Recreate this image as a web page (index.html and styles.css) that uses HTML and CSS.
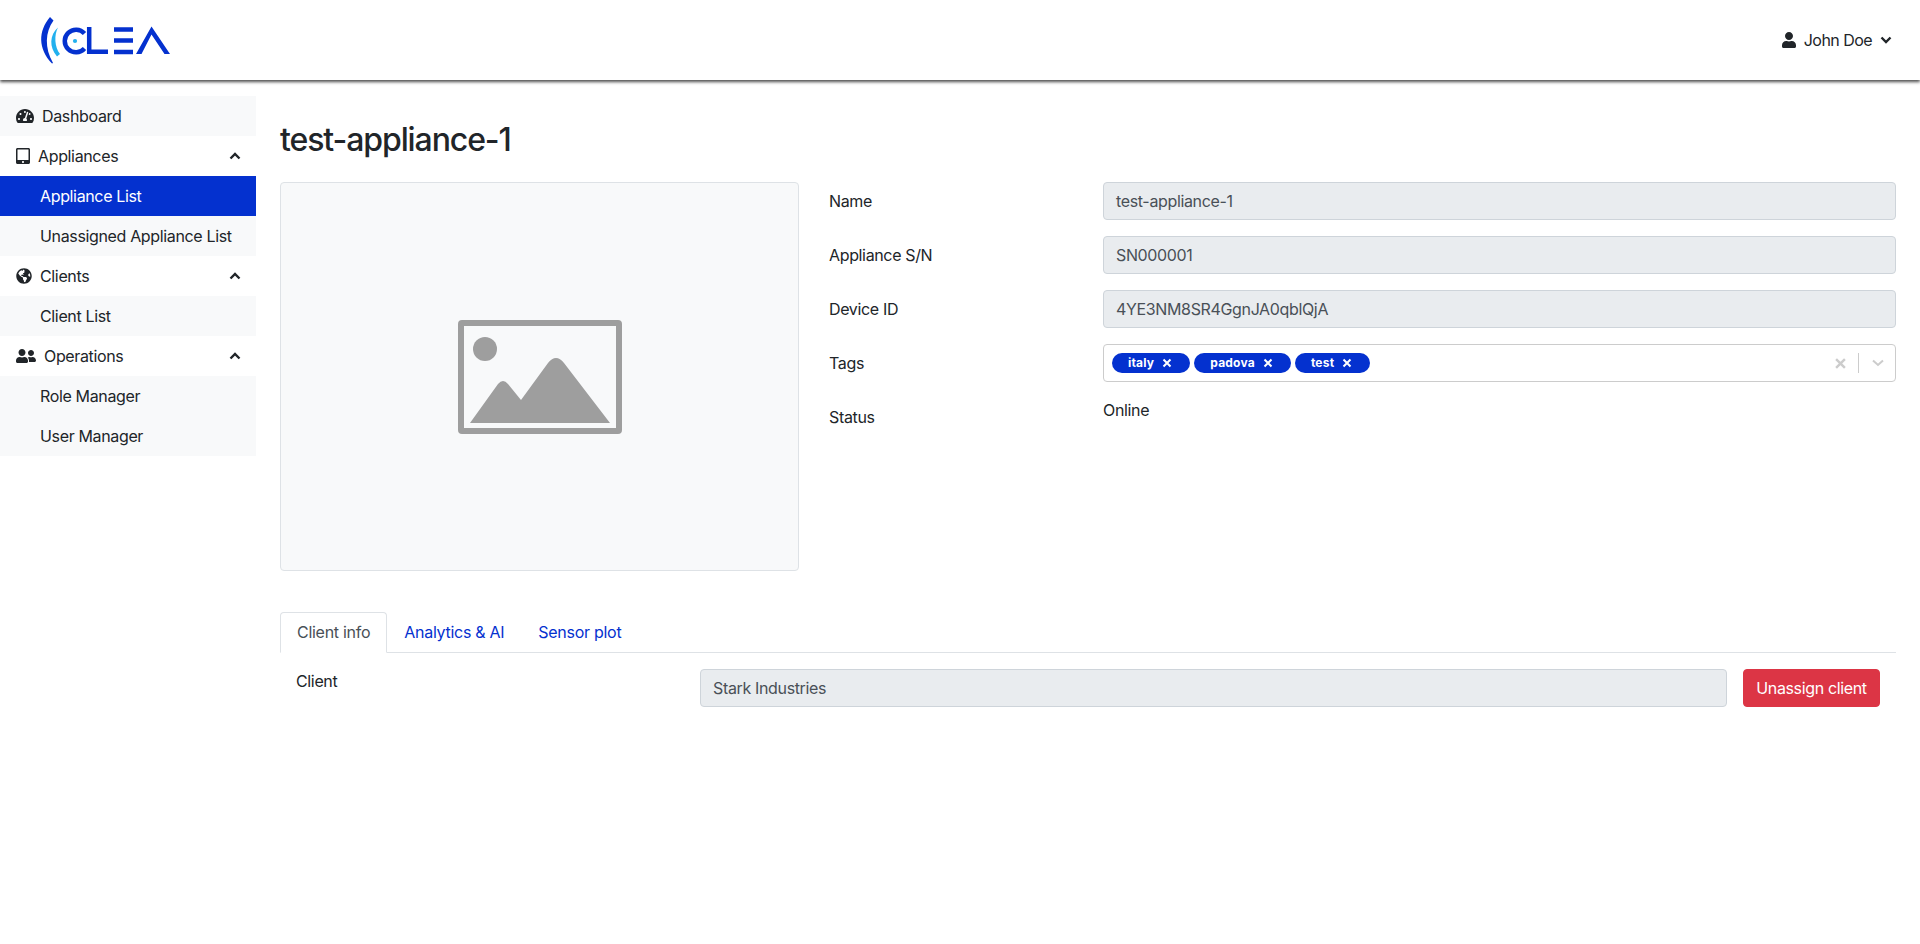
FILE: index.html
```html
<!DOCTYPE html>
<html lang="en">
<head>
<meta charset="utf-8">
<title>test-appliance-1</title>
<link rel="stylesheet" href="styles.css">
</head>
<body>
<header class="topbar">
  <svg class="logo" viewBox="0 0 140 56" width="140" height="56" aria-label="CLEA logo">
    <path class="logo-outer" d="M11 0 L14.5 3.5 C6 15 5.5 31 14 46 L13 46.5 C-1 32 -1 14 11 0Z"/>
    <path class="logo-inner" d="M19 10.5 C15 18 15.5 30 21 37 L18 39.5 C10 30 10.5 18 19 10.5Z"/>
    <path class="logo-stroke" d="M45.5 16.5 A11.3 11.3 0 1 0 45.5 31.5"/>
    <circle class="logo-dot" cx="36" cy="24" r="2.1"/>
    <path class="logo-stroke" d="M50.2 10 V34.8 H69"/>
    <path class="logo-stroke" d="M75 12.5 H94 M75 23.5 H94 M75 35 H94"/>
    <polygon class="logo-fill" points="97,37 112.5,9.5 131,37 125.5,37 112.5,17.5 102.5,37"/>
  </svg>
  <div class="user">
    <svg class="icon-user" viewBox="0 0 448 512"><path d="M224 256c70.7 0 128-57.3 128-128S294.7 0 224 0 96 57.3 96 128s57.3 128 128 128zm89.6 32h-16.7c-22.2 10.2-46.9 16-72.9 16s-50.6-5.8-72.9-16h-16.7C60.2 288 0 348.2 0 422.4V464c0 26.5 21.5 48 48 48h352c26.5 0 48-21.5 48-48v-41.6c0-74.2-60.2-134.4-134.4-134.4z"/></svg>
    <span>John Doe</span>
    <svg class="chev" viewBox="0 0 12 8"><path d="M1.5 1.5 L6 6 L10.5 1.5"/></svg>
  </div>
</header>
<div class="layout">
  <nav class="sidebar">
    <a class="item sub-bg"><svg class="ic ic-dash" viewBox="0 0 576 512"><path d="M288 32C128.94 32 0 160.94 0 320c0 52.8 14.25 102.26 39.06 144.8 5.61 9.62 16.3 15.2 27.44 15.2h443c11.14 0 21.83-5.58 27.44-15.2C561.75 422.26 576 372.8 576 320c0-159.06-128.94-288-288-288zm0 64c14.71 0 26.58 10.13 30.32 23.65-1.11 2.26-2.64 4.23-3.45 6.67l-9.22 27.67c-5.13 3.49-10.97 6.01-17.64 6.01-17.67 0-32-14.33-32-32S270.33 96 288 96zM96 384c-17.67 0-32-14.33-32-32s14.33-32 32-32 32 14.33 32 32-14.33 32-32 32zm48-160c-17.67 0-32-14.33-32-32s14.33-32 32-32 32 14.33 32 32-14.33 32-32 32zm246.77-72.41l-61.33 184C343.13 347.33 352 364.54 352 384c0 11.72-3.38 22.55-8.88 32H232.88c-5.5-9.45-8.88-20.28-8.88-32 0-33.94 26.5-61.43 59.9-63.59l61.34-184.01c4.17-12.56 17.73-19.45 30.36-15.17 12.57 4.19 19.35 17.79 15.17 30.36zm14.66 57.2l15.52-46.55c3.47-1.29 7.13-2.23 11.05-2.23 17.67 0 32 14.33 32 32s-14.33 32-32 32c-11.38-.01-20.89-6.28-26.57-15.22zM480 384c-17.67 0-32-14.33-32-32s14.33-32 32-32 32 14.33 32 32-14.33 32-32 32z"/></svg><span>Dashboard</span></a>
    <a class="item"><svg class="ic ic-tab" viewBox="0 0 448 512"><path d="M400 0H48C21.5 0 0 21.5 0 48v416c0 26.5 21.5 48 48 48h352c26.5 0 48-21.5 48-48V48c0-26.5-21.5-48-48-48zM224 480c-17.7 0-32-14.3-32-32s14.3-32 32-32 32 14.3 32 32-14.3 32-32 32zm176-108c0 6.6-5.4 12-12 12H60c-6.6 0-12-5.4-12-12V60c0-6.6 5.4-12 12-12h328c6.6 0 12 5.4 12 12v312z"/></svg><span>Appliances</span><svg class="chev-up" viewBox="0 0 12 8"><path d="M1.5 6.5 L6 2 L10.5 6.5"/></svg></a>
    <a class="item sub active">Appliance List</a>
    <a class="item sub sub-bg">Unassigned Appliance List</a>
    <a class="item"><svg class="ic ic-globe" viewBox="0 0 496 512"><path d="M248 8C111.03 8 0 119.03 0 256s111.03 248 248 248 248-111.03 248-248S384.97 8 248 8zm82.29 357.6c-3.9 3.88-7.99 7.95-11.31 11.28-2.99 3-5.1 6.7-6.17 10.71-1.51 5.66-2.73 11.38-4.77 16.87l-17.39 46.85c-13.76 3-28 4.69-42.65 4.69v-27.38c1.69-12.62-7.64-36.26-22.63-51.25-6-6-9.37-14.14-9.37-22.63v-32.01c0-11.64-6.27-22.34-16.46-27.97-14.37-7.95-34.81-19.06-48.81-26.11-11.48-5.78-22.1-13.14-31.65-21.75l-.8-.72a114.792 114.792 0 0 1-18.06-20.74c-9.38-13.77-24.66-36.42-34.59-51.14 20.47-45.5 57.36-82.04 103.2-101.89l24.01 12.01C203.48 89.74 216 82.01 216 70.11v-11.3c7.99-1.29 16.12-2.11 24.39-2.42l28.3 28.3c6.25 6.25 6.25 16.38 0 22.63L264 112l-10.34 10.34c-3.12 3.12-3.12 8.19 0 11.31l4.69 4.69c3.12 3.12 3.12 8.19 0 11.31l-8 8a8.008 8.008 0 0 1-5.66 2.34h-8.99c-2.08 0-4.08.81-5.58 2.27l-9.92 9.65a8.008 8.008 0 0 0-1.58 9.31l15.59 31.19c2.66 5.32-1.21 11.58-7.15 11.58h-5.64c-1.93 0-3.79-.7-5.24-1.96l-9.28-8.06a16.017 16.017 0 0 0-15.55-3.1l-31.17 10.39a11.95 11.95 0 0 0-8.17 11.34c0 4.53 2.56 8.66 6.61 10.69l11.08 5.54c9.41 4.71 19.79 7.16 30.31 7.16s22.59 27.29 32 32h66.75c8.49 0 16.62 3.37 22.63 9.37l13.69 13.69a30.503 30.503 0 0 1 8.93 21.57 46.536 46.536 0 0 1-13.72 32.98zM417 274.25c-5.79-1.45-10.84-5-14.15-9.97l-17.98-26.97a23.97 23.97 0 0 1 0-26.62l19.59-29.38c2.32-3.47 5.5-6.29 9.24-8.15l12.98-6.49C440.2 193.59 448 223.87 448 256c0 8.67-.74 17.16-1.82 25.54L417 274.25z"/></svg><span>Clients</span><svg class="chev-up" viewBox="0 0 12 8"><path d="M1.5 6.5 L6 2 L10.5 6.5"/></svg></a>
    <a class="item sub sub-bg">Client List</a>
    <a class="item"><svg class="ic ic-users" viewBox="0 0 640 512"><path d="M192 256c61.9 0 112-50.1 112-112S253.9 32 192 32 80 82.1 80 144s50.1 112 112 112zm76.8 32h-8.3c-20.8 10-43.9 16-68.5 16s-47.6-6-68.5-16h-8.3C51.6 288 0 339.6 0 403.2V432c0 26.5 21.5 48 48 48h288c26.5 0 48-21.5 48-48v-28.8c0-63.6-51.6-115.2-115.2-115.2zM480 256c53 0 96-43 96-96s-43-96-96-96-96 43-96 96 43 96 96 96zm48 32h-3.8c-13.9 4.8-28.6 8-44.2 8s-30.3-3.2-44.2-8H432c-20.4 0-39.2 5.9-55.7 15.4 24.4 26.3 39.7 61.2 39.7 99.8v38.4c0 2.2-.5 4.3-.6 6.4H592c26.5 0 48-21.5 48-48 0-61.9-50.1-112-112-112z"/></svg><span>Operations</span><svg class="chev-up" viewBox="0 0 12 8"><path d="M1.5 6.5 L6 2 L10.5 6.5"/></svg></a>
    <a class="item sub sub-bg">Role Manager</a>
    <a class="item sub sub-bg">User Manager</a>
  </nav>
  <main class="content">
    <h2 class="title">test-appliance-1</h2>
    <section class="overview">
      <div class="photo">
        <svg class="photo-icon" viewBox="0 0 164 114" width="164" height="114">
          <rect class="photo-frame" x="3" y="3" width="158" height="108" rx="1"/>
          <circle class="photo-fill" cx="27" cy="29" r="12"/>
          <path class="photo-fill" d="M12 103 L40 64 Q45 58 50 64 L63 80 L90 43 Q98 33 106 43 L152 103Z"/>
        </svg>
      </div>
      <div class="fields">
        <div class="field"><label>Name</label><div class="input">test-appliance-1</div></div>
        <div class="field"><label>Appliance S/N</label><div class="input">SN000001</div></div>
        <div class="field"><label>Device ID</label><div class="input">4YE3NM8SR4GgnJA0qblQjA</div></div>
        <div class="field"><label>Tags</label>
          <div class="select">
            <div class="pills">
              <span class="pill">italy<svg class="pill-x" viewBox="0 0 10 10"><path d="M1.5 1.5 L8.5 8.5 M8.5 1.5 L1.5 8.5"/></svg></span>
              <span class="pill">padova<svg class="pill-x" viewBox="0 0 10 10"><path d="M1.5 1.5 L8.5 8.5 M8.5 1.5 L1.5 8.5"/></svg></span>
              <span class="pill">test<svg class="pill-x" viewBox="0 0 10 10"><path d="M1.5 1.5 L8.5 8.5 M8.5 1.5 L1.5 8.5"/></svg></span>
            </div>
            <svg class="clear" viewBox="0 0 10 10"><path d="M1 1 L9 9 M9 1 L1 9"/></svg>
            <i class="sep"></i>
            <svg class="drop" viewBox="0 0 12 8"><path d="M1 1.5 L6 6 L11 1.5"/></svg>
          </div>
        </div>
        <div class="field"><label>Status</label><div class="static">Online</div></div>
      </div>
    </section>
    <ul class="tabs">
      <li class="tab current">Client info</li>
      <li class="tab">Analytics &amp; AI</li>
      <li class="tab">Sensor plot</li>
    </ul>
    <section class="client">
      <div class="client-label">Client</div>
      <div class="input">Stark Industries</div>
      <button class="danger">Unassign client</button>
    </section>
  </main>
</div>
</body>
</html>
```
FILE: styles.css
```css
* { box-sizing: border-box; }
html, body { margin: 0; height: 100%; }
body {
  font-family: Inter, "Noto Sans", sans-serif;
  font-size: 16px;
  line-height: 24px;
  letter-spacing: -0.35px;
  color: #212529;
  background: #fff;
}
.topbar {
  height: 80px;
  display: flex;
  align-items: center;
  justify-content: space-between;
  padding: 0 28px 0 39px;
  background: #fff;
  box-shadow: 0 2px 3px rgba(0, 0, 0, .7);
  position: relative;
}
.logo { display: block; margin-top: 10px; overflow: visible; }
.logo-outer, .logo-fill { fill: #0431cf; }
.logo-inner { fill: #22b0ee; }
.logo-stroke { fill: none; stroke: #0431cf; stroke-width: 4.5; }
.logo-dot { fill: #22b0ee; }
.user { display: flex; align-items: center; margin-top: -1px; letter-spacing: -0.55px; }
.icon-user { width: 14px; height: 16px; fill: #212529; margin-right: 8px; }
.chev { width: 12px; height: 8px; margin-left: 8px; fill: none; stroke: #212529; stroke-width: 2.4; }
.layout { display: flex; align-items: flex-start; }
.sidebar { width: 256px; flex: none; margin-top: 16px; }
.item {
  height: 40px;
  display: flex;
  align-items: center;
  padding: 0 16px;
  color: #212529;
  white-space: nowrap;
}
.sub { padding-left: 40px; }
.sub-bg { background: #f8f9fa; }
.active { background: #0431cf; color: #fff; }
.ic { fill: #212529; height: 16px; flex: none; }
.ic-dash { width: 18px; margin-right: 8px; }
.ic-tab { width: 14px; margin-right: 8px; }
.ic-globe { width: 16px; margin-right: 8px; }
.ic-users { width: 20px; margin-right: 8px; }
.chev-up { width: 12px; height: 8px; margin-left: auto; margin-right: -1px; fill: none; stroke: #212529; stroke-width: 2.4; }
.content { flex: 1; min-width: 0; padding: 41px 24px 0; }
.title { margin: 0 0 23px; font-size: 32px; line-height: 38px; font-weight: 550; letter-spacing: -1.1px; }
.overview { display: flex; gap: 30px; }
.photo {
  width: 519px;
  height: 389px;
  flex: none;
  display: flex;
  align-items: center;
  justify-content: center;
  background: #f8f9fa;
  border: 1px solid #dee2e6;
  border-radius: 4px;
}
.photo-frame { fill: none; stroke: #9e9e9e; stroke-width: 6; }
.photo-fill { fill: #9e9e9e; }
.fields { flex: 1; min-width: 0; display: flex; flex-direction: column; gap: 16px; }
.field { display: grid; grid-template-columns: 274px 1fr; }
.field label { padding-top: 7px; }
.input {
  height: 38px;
  padding: 6px 12px;
  background: #e9ecef;
  border: 1px solid #ced4da;
  border-radius: 4px;
  color: #495057;
}
.select {
  height: 38px;
  display: flex;
  align-items: center;
  padding: 0 11px 0 8px;
  border: 1px solid #ccc;
  border-radius: 4px;
  background: #fff;
}
.pills { display: flex; gap: 4px; flex: 1; }
.pill {
  height: 20px;
  display: flex;
  align-items: center;
  padding: 0 18px 0 16px;
  border-radius: 10px;
  background: #0431cf;
  color: #fff;
  font-size: 12px;
  font-weight: 700;
  line-height: 20px;
  letter-spacing: 0.2px;
}
.pill-x { width: 10px; height: 10px; margin-left: 8px; fill: none; stroke: #fff; stroke-width: 2; }
.clear { width: 11px; height: 11px; fill: none; stroke: #ccc; stroke-width: 2.2; margin-right: 12px; }
.sep { width: 1px; height: 20px; background: #ccc; margin-right: 13px; }
.drop { width: 12px; height: 8px; fill: none; stroke: #ccc; stroke-width: 2; }
.tabs {
  list-style: none;
  display: flex;
  margin: 41px 0 0;
  padding: 0;
  border-bottom: 1px solid #dee2e6;
}
.tab {
  height: 41px;
  padding: 7px 16px;
  color: #0431cf;
  letter-spacing: -0.28px;
  border: 1px solid transparent;
  border-radius: 4px 4px 0 0;
  margin-bottom: -1px;
}
.current {
  color: #495057;
  background: #fff;
  border-color: #dee2e6 #dee2e6 #fff;
}
.client {
  display: grid;
  grid-template-columns: 404px 1fr 137px;
  column-gap: 16px;
  padding: 16px 16px 0;
}
.client-label { margin-right: -16px; }
.client .input { margin-left: -16px; }
.danger {
  height: 38px;
  padding: 0;
  font: inherit;
  letter-spacing: inherit;
  color: #fff;
  background: #dc3545;
  border: 1px solid #dc3545;
  border-radius: 4px;
}
```
